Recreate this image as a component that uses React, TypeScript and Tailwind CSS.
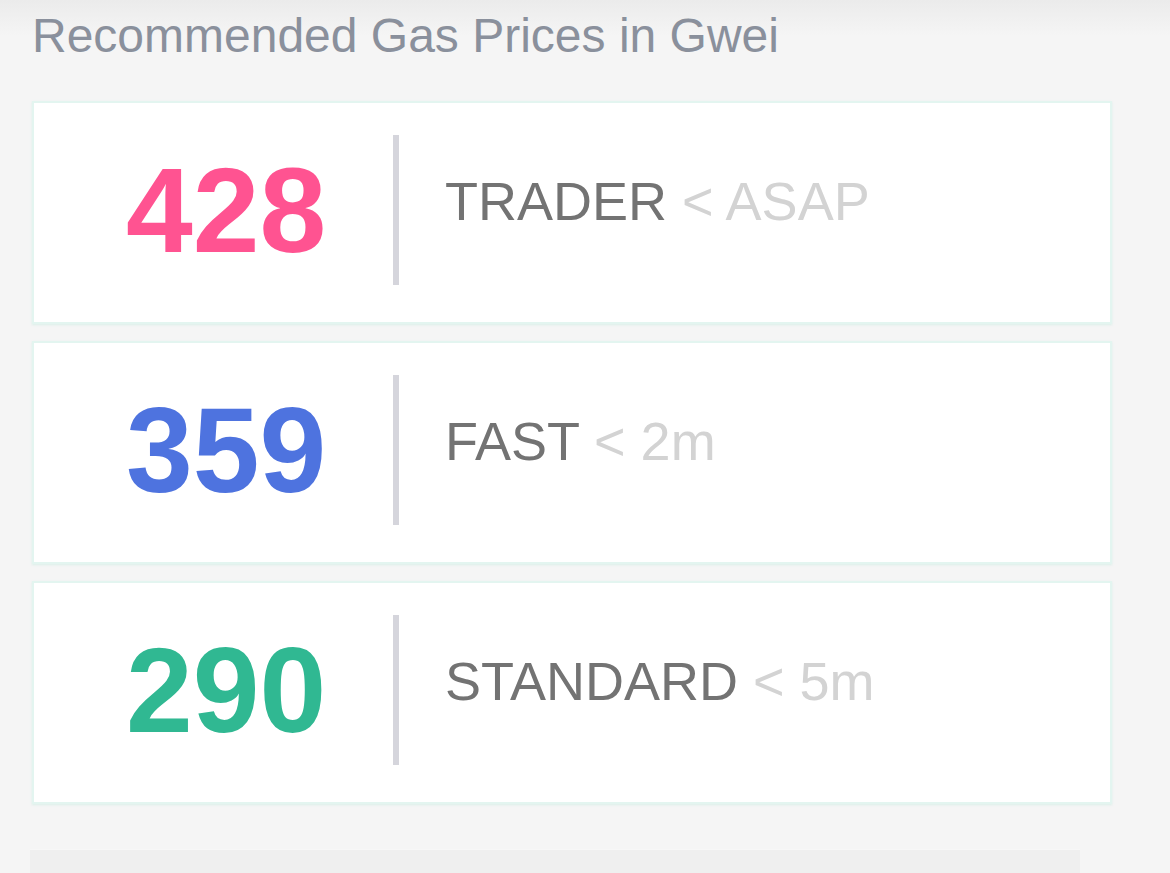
const prices = [
  { value: 428, color: "text-[#ff5391]", label: "TRADER", eta: "< ASAP" },
  { value: 359, color: "text-[#4e73df]", label: "FAST", eta: "< 2m" },
  { value: 290, color: "text-[#30b892]", label: "STANDARD", eta: "< 5m" },
]

export default function App() {
  return (
    <div
      className="h-[873px] w-[1170px] overflow-hidden bg-[#f5f5f5] bg-[linear-gradient(to_bottom,#ebebeb_0px,#f5f5f5_36px)]"
      style={{ fontFamily: '"Liberation Sans", Arial, sans-serif' }}
    >
      <h1 className="pl-[32px] pt-[8px] text-[48px] leading-[55px] font-normal text-[#8a909c]">
        Recommended Gas Prices in Gwei
      </h1>

      <div className="mt-[38px] ml-[32px] flex w-[1080px] flex-col gap-[17px]">
        {prices.map((p) => (
          <div
            key={p.label}
            className="flex h-[223px] items-center border-2 border-[#e3f5f0] bg-white pb-[6px] pl-[92px] shadow-[0_1px_2px_rgba(200,235,225,0.6)]"
          >
            <div className={`w-[267px] text-[120px] leading-none font-bold ${p.color}`}>
              {p.value}
            </div>
            <div className="h-[150px] w-[6px] bg-[#d5d5dc]" />
            <div className="ml-[46px] pb-[18px] text-[54px] leading-none text-[#737373]">
              {p.label} <span className="text-[#d3d3d3]">{p.eta}</span>
            </div>
          </div>
        ))}
      </div>

      <div className="mt-[45px] ml-[30px] h-[60px] w-[1050px] border-t border-[#f7f7f7] bg-[#efefef]" />
    </div>
  )
}
